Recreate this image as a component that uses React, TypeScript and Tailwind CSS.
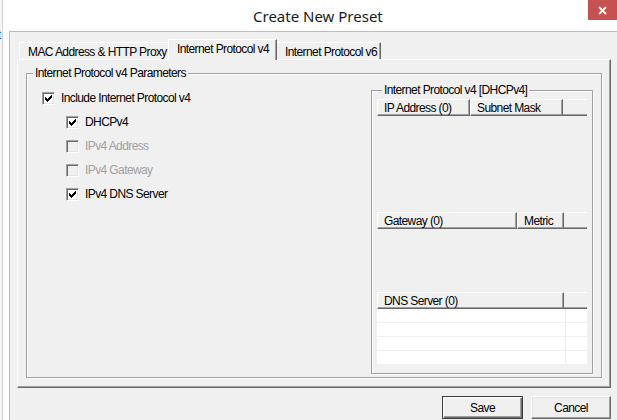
import React from 'react';

const ui = "font-['Liberation_Sans',Arial,sans-serif] text-[12px] tracking-[-0.6px] text-black";

function CheckBox({ checked, disabled, label }: { checked?: boolean; disabled?: boolean; label: string }) {
  return (
    <div className="h-[24px] flex items-center gap-[6px]">
      <div className="w-[13px] h-[13px] shrink-0 border border-t-[#a0a0a0] border-l-[#a0a0a0] border-r-white border-b-white">
        <div
          className={`w-full h-full flex items-center justify-center shadow-[inset_1px_1px_0_#696969,inset_-1px_-1px_0_#e3e3e3] ${
            disabled ? 'bg-[#f0f0f0]' : 'bg-white'
          }`}
        >
          {checked && (
            <svg width="7" height="7" viewBox="0 0 7 7">
              <path d="M0 2h1v1h1v1h1v-1h1v-1h1v-1h1v-1h1v3h-1v1h-1v1h-1v1h-1v1h-1v-1h-1v-1h-1z" fill="#000" />
            </svg>
          )}
        </div>
      </div>
      <span className={disabled ? 'text-[#a0a0a0]' : 'text-black'}>{label}</span>
    </div>
  );
}

const headCell =
  'h-[17px] shrink-0 flex items-center pl-[6px] bg-[#f0f0f0] whitespace-nowrap overflow-hidden border-t border-l border-r border-b border-t-white border-l-white border-r-[#696969] border-b-[#696969] shadow-[inset_-1px_-1px_0_#a0a0a0]';
const headFill =
  'h-[17px] flex-1 bg-[#f0f0f0] border-t border-b border-t-white border-b-[#696969] shadow-[inset_0_-1px_0_#a0a0a0]';

function Tab({ label, active, className }: { label: string; active?: boolean; className: string }) {
  return (
    <div
      className={`flex items-center whitespace-nowrap bg-[#f0f0f0] border-t border-l border-r border-t-white border-l-white border-r-[#696969] shadow-[inset_-1px_0_0_#a0a0a0] ${className} ${
        active ? 'h-[21px] -mx-[2px] -mb-px relative z-10 pb-[2px]' : 'h-[17px] pt-[1px]'
      }`}
    >
      {label}
    </div>
  );
}

export default function App() {
  return (
    <div className={`w-[617px] h-[420px] overflow-hidden flex bg-[#f5f5f5] ${ui}`}>
      {/* what peeks out behind the window */}
      <div className="w-[2px] shrink-0 overflow-hidden pt-[26px]">
        <span className="block -ml-[2px] text-[#2a5db0] text-[12px]">t</span>
      </div>
      <div className="w-px shrink-0 bg-[#d4d4d4]" />

      {/* window */}
      <div className="flex-1 flex flex-col bg-white">
        <div className="h-[31px] shrink-0 flex">
          <div className="flex-1 pl-[250px] pt-[5px] font-['Noto_Sans',sans-serif] text-[15px] tracking-normal text-[#1a1a1a] whitespace-nowrap">
            Create New Preset
          </div>
          <div className="w-[29px] h-[20px] bg-[#c75050] flex items-center justify-center">
            <svg width="9" height="9" viewBox="0 0 9 9" fill="none" stroke="#fff" strokeWidth="1.8">
              <path d="M1 1l7 7M8 1L1 8" />
            </svg>
          </div>
        </div>

        <div className="flex-1 flex">
          <div className="w-[6px] shrink-0" />
          {/* client area */}
          <div className="flex-1 bg-[#f0f0f0] border-t border-l border-[#bcbcbc] pl-[7px] pt-[7px]">
            {/* tabs */}
            <div className="flex items-end h-[20px] pl-[2px]">
              <Tab label="MAC Address & HTTP Proxy" className="w-[151px] pl-[8px]" />
              <Tab label="Internet Protocol v4" active className="w-[109px] pl-[8px]" />
              <Tab label="Internet Protocol v6" className="w-[106px] pl-[9px]" />
            </div>

            {/* tab page */}
            <div className="w-[594px] h-[329px] flex flex-col border border-t-white border-l-white border-r-[#696969] border-b-[#696969] shadow-[inset_-1px_-1px_0_#a0a0a0] pt-[6px] pr-[8px] pb-[9px] pl-[8px]">
              <fieldset className="flex-1 min-h-0 flex border border-[#a0a0a0] shadow-[inset_1px_1px_0_#fff,1px_1px_0_#fff]">
                <legend className="ml-[6px] px-[2px] leading-[14px] bg-[#f0f0f0]">Internet Protocol v4 Parameters</legend>

                <div className="flex-1 pl-[15px] pt-[6px]">
                  <CheckBox checked label="Include Internet Protocol v4" />
                  <div className="pl-[24px]">
                    <CheckBox checked label="DHCPv4" />
                    <CheckBox disabled label="IPv4 Address" />
                    <CheckBox disabled label="IPv4 Gateway" />
                    <CheckBox checked label="IPv4 DNS Server" />
                  </div>
                </div>

                <fieldset className="w-[222px] shrink-0 mt-[3px] mb-[3px] mr-[8px] border border-[#a0a0a0] shadow-[inset_1px_1px_0_#fff,1px_1px_0_#fff] pl-[5px] pr-[5px] pt-[2px]">
                  <legend className="ml-[5px] px-[2px] leading-[14px] bg-[#f0f0f0]">Internet Protocol v4 [DHCPv4]</legend>

                  <div className="h-[107px] flex flex-col">
                    <div className="flex">
                      <div className={`${headCell} w-[93px]`}>IP Address (0)</div>
                      <div className={`${headCell} w-[93px]`}>Subnet Mask</div>
                      <div className={headFill} />
                    </div>
                  </div>

                  <div className="h-[74px] mt-[6px] flex flex-col">
                    <div className="flex">
                      <div className={`${headCell} w-[140px]`}>Gateway (0)</div>
                      <div className={`${headCell} w-[47px]`}>Metric</div>
                      <div className={headFill} />
                    </div>
                  </div>

                  <div className="mt-[6px] flex flex-col">
                    <div className="flex">
                      <div className={`${headCell} w-[187px]`}>DNS Server (0)</div>
                      <div className={headFill} />
                    </div>
                    <div className="bg-white">
                      {[0, 1, 2, 3].map((r) => (
                        <div key={r} className="h-[14px] flex border-b border-[#f0f0f0]">
                          <div className="w-[189px] border-r border-[#f0f0f0]" />
                        </div>
                      ))}
                    </div>
                  </div>
                </fieldset>
              </fieldset>
            </div>

            {/* buttons */}
            <div className="w-[594px] flex justify-end gap-[8px] mt-[8px]">
              <button className="w-[81px] h-[23px] border border-[#3c3c3c] bg-[#f0f0f0] tracking-[-0.6px]">
                <div className="w-full h-full flex items-center justify-center shadow-[inset_1px_1px_0_#fff,inset_-1px_-1px_0_#696969,inset_-2px_-2px_0_#a0a0a0]">
                  Save
                </div>
              </button>
              <button className="w-[80px] h-[23px] border border-t-white border-l-white border-r-[#696969] border-b-[#696969] bg-[#f0f0f0] tracking-[-0.6px]">
                <div className="w-full h-full flex items-center justify-center shadow-[inset_-1px_-1px_0_#a0a0a0,inset_1px_1px_0_#e3e3e3]">
                  Cancel
                </div>
              </button>
            </div>
          </div>
        </div>
      </div>
    </div>
  );
}
